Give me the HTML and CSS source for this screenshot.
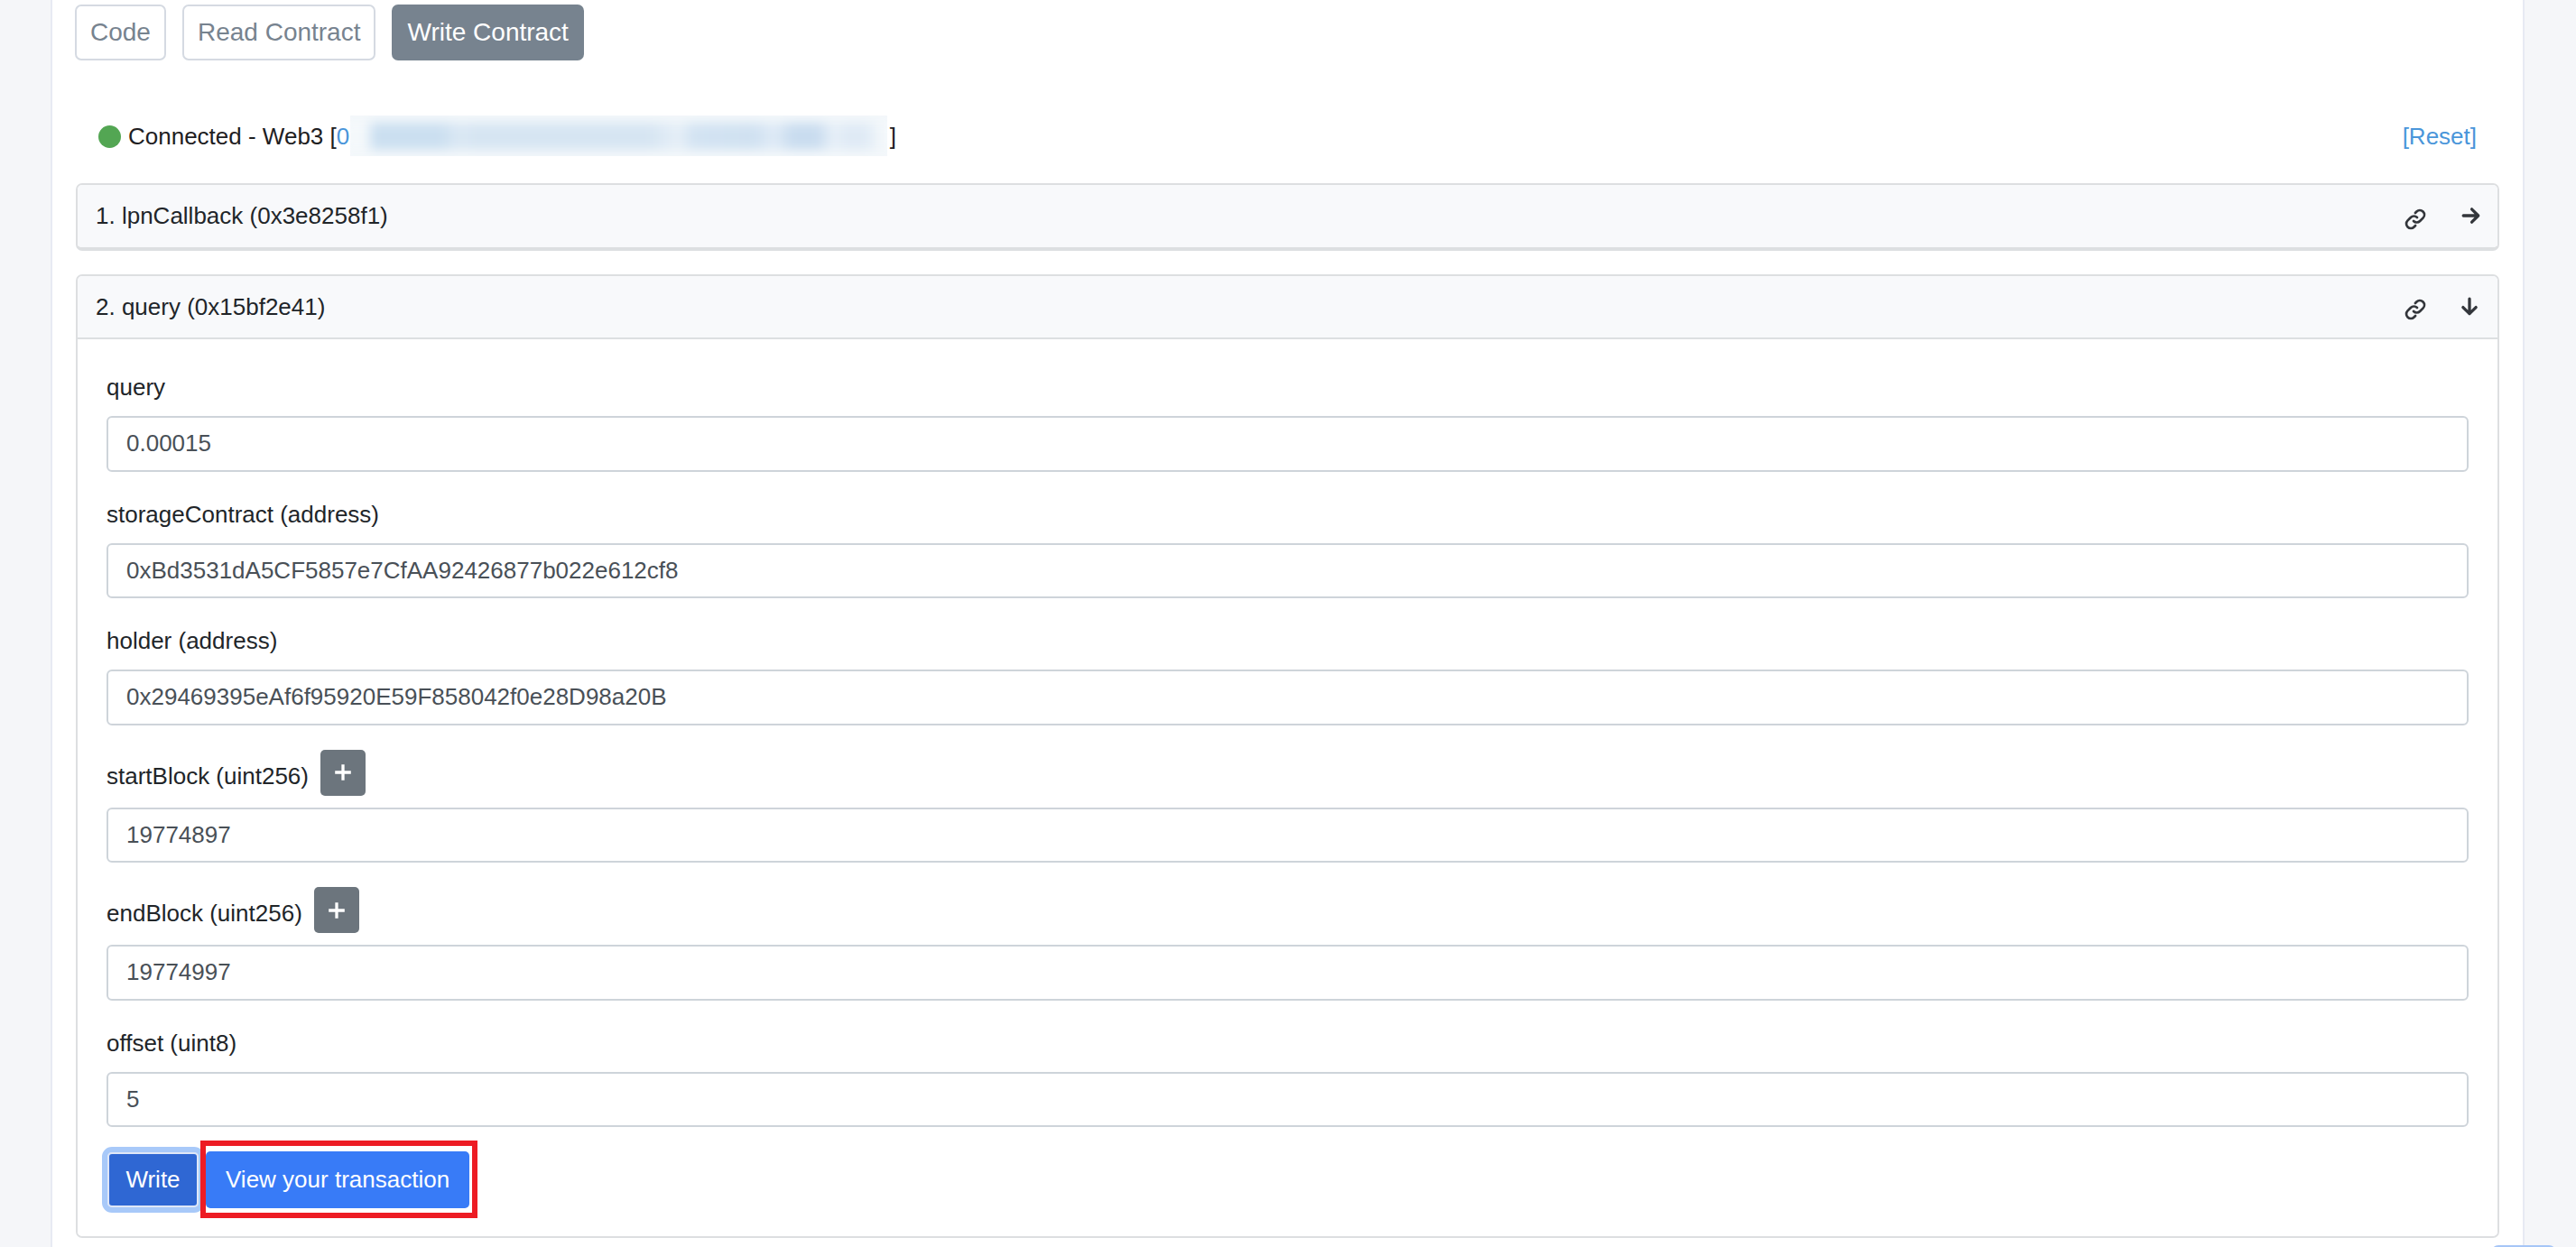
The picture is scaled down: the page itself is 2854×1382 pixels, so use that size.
FILE: index.html
```html
<!DOCTYPE html>
<html lang="en">
<head>
<meta charset="utf-8">
<title>Write Contract</title>
<link rel="stylesheet" href="styles.css">
</head>
<body>
<main class="card">
  <nav class="tabs">
    <a class="tab">Code</a>
    <a class="tab">Read Contract</a>
    <a class="tab tab-active">Write Contract</a>
  </nav>
  <div class="status">
    <div class="status-left">
      <span class="dot"></span>
      <span>Connected - Web3 [</span><span class="addr"><a class="link">0</a><span class="blur"></span></span><span>]</span>
    </div>
    <a class="link">[Reset]</a>
  </div>
  <section class="acc acc-closed">
    <header class="acc-head acc-head-closed">
      <span>1. lpnCallback (0x3e8258f1)</span>
      <span class="acc-icons">
        <svg class="ico-link" viewBox="0 0 24 24" fill="none" stroke="#33363b" stroke-width="2.7" stroke-linecap="round"><path d="M10 14a5 5 0 0 0 7.100 0l3.400-3.400a5 5 0 0 0-7.100-7.100l-1.500 1.500"/><path d="M14 10a5 5 0 0 0-7.100 0l-3.400 3.400a5 5 0 0 0 7.100 7.100l1.500-1.500"/></svg>
        <svg class="ico-arrow" viewBox="0 0 20 20" fill="none" stroke="#33363b" stroke-width="3" stroke-linecap="round" stroke-linejoin="round"><path d="M2 10h15M10.500 3.500 17 10l-6.500 6.500"/></svg>
      </span>
    </header>
  </section>
  <section class="acc">
    <header class="acc-head acc-head-open">
      <span>2. query (0x15bf2e41)</span>
      <span class="acc-icons">
        <svg class="ico-link" viewBox="0 0 24 24" fill="none" stroke="#33363b" stroke-width="2.7" stroke-linecap="round"><path d="M10 14a5 5 0 0 0 7.100 0l3.400-3.400a5 5 0 0 0-7.100-7.100l-1.500 1.500"/><path d="M14 10a5 5 0 0 0-7.100 0l-3.400 3.400a5 5 0 0 0 7.100 7.100l1.500-1.500"/></svg>
        <svg class="ico-arrow ico-down" viewBox="0 0 20 20" fill="none" stroke="#33363b" stroke-width="3" stroke-linecap="round" stroke-linejoin="round"><path d="M10 2v15M3.500 10.500 10 17l6.500-6.500"/></svg>
      </span>
    </header>
    <form class="form">
      <div class="field">
        <label class="lbl">query</label>
        <input class="ctl" value="0.00015">
      </div>
      <div class="field">
        <label class="lbl">storageContract (address)</label>
        <input class="ctl" value="0xBd3531dA5CF5857e7CfAA92426877b022e612cf8">
      </div>
      <div class="field">
        <label class="lbl">holder (address)</label>
        <input class="ctl" value="0x29469395eAf6f95920E59F858042f0e28D98a20B">
      </div>
      <div class="field field-add">
        <div class="lbl-row"><label class="lbl">startBlock (uint256)</label><button type="button" class="add"><svg viewBox="0 0 20 20" fill="none" stroke="#fff" stroke-width="3"><path d="M10 2v16M2 10h16"/></svg></button></div>
        <input class="ctl" value="19774897">
      </div>
      <div class="field field-add">
        <div class="lbl-row"><label class="lbl">endBlock (uint256)</label><button type="button" class="add"><svg viewBox="0 0 20 20" fill="none" stroke="#fff" stroke-width="3"><path d="M10 2v16M2 10h16"/></svg></button></div>
        <input class="ctl" value="19774997">
      </div>
      <div class="field field-last">
        <label class="lbl">offset (uint8)</label>
        <input class="ctl" value="5">
      </div>
      <div class="actions">
        <button type="button" class="btn btn-write">Write</button>
        <span class="highlight"><a class="btn btn-view">View your transaction</a></span>
      </div>
    </form>
  </section>
</main>
<span class="to-top"></span>
</body>
</html>
```
FILE: styles.css
```css
* { box-sizing: border-box; }
html, body { height: 100%; }
body {
  margin: 0;
  background: #f5f6f9;
  font-family: "Liberation Sans", Arial, sans-serif;
  font-size: 26px;
  color: #212529;
  overflow: hidden;
  position: relative;
}
.card {
  margin: 0 57px 0 56px;
  min-height: 100%;
  background: #fff;
  border-left: 2px solid #e7eaf3;
  border-right: 2px solid #e7eaf3;
  padding: 5px 26px 0;
}
.tabs { display: flex; gap: 18px; margin-left: -1px; }
.tab {
  height: 62px;
  padding: 0 15px;
  display: flex;
  align-items: center;
  border: 2px solid #d5dae2;
  border-radius: 7px;
  font-size: 28px;
  color: #77838f;
}
.tab-active { background: #77838f; border-color: #77838f; color: #fff; }
.status {
  height: 136px;
  padding: 69px 25px 37px;
  display: flex;
  align-items: center;
  justify-content: space-between;
  color: #1e2022;
}
.status-left { display: flex; align-items: center; }
.dot {
  width: 25px;
  height: 25px;
  border-radius: 50%;
  background: #53a653;
  margin-right: 8px;
}
.addr { display: flex; align-items: center; width: 613px; position: relative; }
.link { color: #4a96da; }
.blur {
  position: absolute;
  left: 15px;
  top: -8px;
  width: 595px;
  height: 45px;
  overflow: hidden;
  background: #f4f8fb;
}
.blur::before {
  content: "";
  position: absolute;
  left: -10px;
  right: -10px;
  top: 8px;
  bottom: 7px;
  background: linear-gradient(90deg,
    #f4f8fb 0, #f4f8fb 28px,
    #cbdff0 36px, #cbdff0 110px, #dbe8f4 130px,
    #d6e5f2 150px, #d6e5f2 340px, #e6eff7 375px,
    #d3e3f2 390px, #d0e1f1 458px, #e0ebf6 480px,
    #c9dcef 500px, #c9dcef 528px, #e8f0f8 545px,
    #dfeaf5 560px, #dfeaf5 580px, #f4f8fb 600px);
  filter: blur(6px);
}
.acc {
  border: 2px solid #dddfe1;
  border-radius: 7px;
  margin-bottom: 26px;
  overflow: hidden;
}
.acc-closed { border-bottom-width: 4px; }
.acc-head {
  height: 70px;
  background: #f8f9fb;
  padding: 0 18px 0 20px;
  display: flex;
  align-items: center;
  justify-content: space-between;
}
.acc-head-closed { height: 69px; }
.acc-head-open { border-bottom: 2px solid #dddfe1; }
.acc-icons { display: flex; align-items: center; gap: 39px; }
.ico-link { width: 24px; height: 24px; display: block; margin-top: 6px; }
.ico-arrow { width: 22px; height: 22px; display: block; margin-top: -2px; }
.ico-down { margin: 0 2px 0 -2px; }
.form { padding: 36px 32px 20px; background: #fff; }
.field { margin-bottom: 30px; }
.field-add { margin-top: -3px; }
.field-last { margin-bottom: 15px; }
.lbl { display: block; height: 34px; line-height: 34px; margin-bottom: 15px; color: #212529; }
.lbl-row { display: flex; gap: 13px; height: 51px; margin-bottom: 13px; align-items: flex-end; }
.lbl-row .lbl { margin-bottom: 0; height: 44px; line-height: 44px; }
.add {
  width: 50px;
  height: 51px;
  padding: 0;
  border: 0;
  border-radius: 5px;
  background: #6c757d;
  display: flex;
  align-items: center;
  justify-content: center;
}
.add svg { width: 22px; height: 22px; display: block; }
.ctl {
  display: block;
  width: 100%;
  height: 61.5px;
  padding: 0 20px;
  border: 2px solid #ced4da;
  border-radius: 6px;
  background: #fff;
  font: inherit;
  color: #495057;
}
.actions { display: flex; align-items: flex-start; }
.btn {
  display: flex;
  align-items: center;
  border: 0;
  border-radius: 5px;
  color: #fff;
  font: inherit;
}
.btn-write {
  width: 101px;
  height: 61px;
  justify-content: center;
  padding: 0;
  background: #2f67d3;
  border: 2px solid #dfe7f7;
  outline: 6px solid #a8c9f9;
  margin: 13px 0 0 1px;
}
.highlight {
  display: flex;
  padding: 6px 3px 5px 0;
  border: 6px solid #ed1c24;
  margin-left: 2px;
}
.btn-view { background: #387bf7; padding: 0 22px; height: 63px; }
.to-top {
  position: absolute;
  right: 22px;
  bottom: -20px;
  width: 72px;
  height: 22px;
  border-radius: 8px;
  background: #a6c6f7;
}
```
